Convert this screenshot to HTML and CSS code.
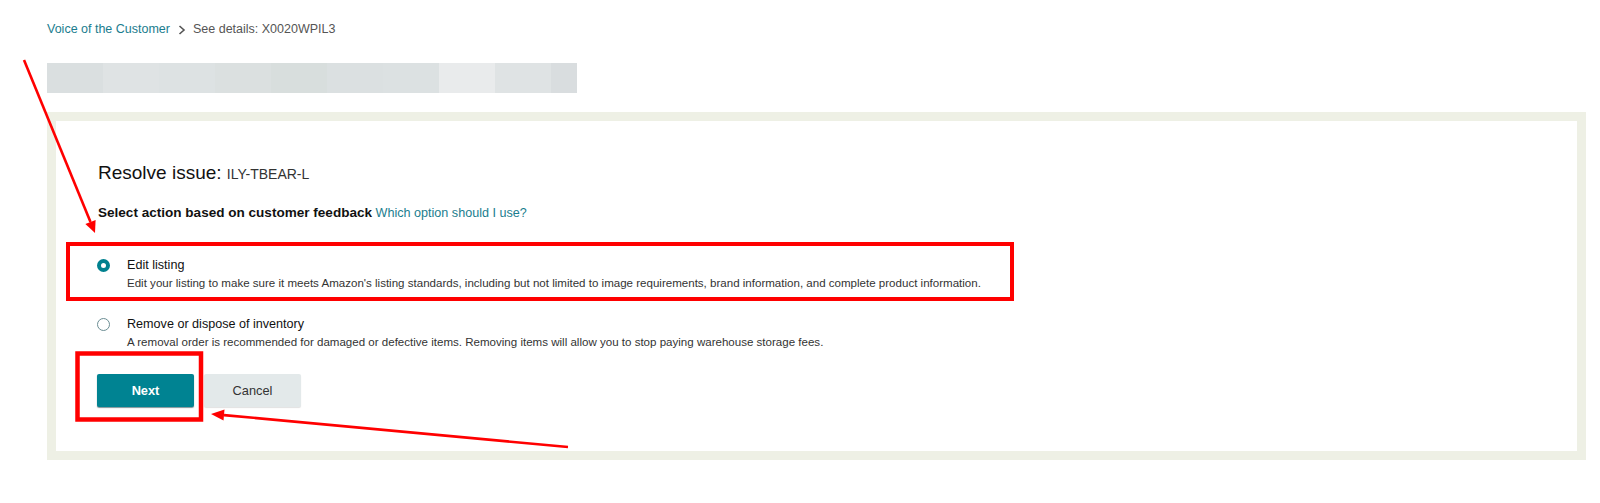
FILE: index.html
```html
<!DOCTYPE html>
<html lang="en">
<head>
  <meta charset="UTF-8" />
  <title>Resolve issue - Voice of the Customer</title>
  <meta name="viewport" content="width=device-width, initial-scale=1.0">
  <link rel="stylesheet" href="styles.css">
</head>
<body>
  <div class="crumbs">
    <a class="crumb-link" href="#">Voice of the Customer</a>
    <span class="crumb-sep">
      <svg width="8" height="10" viewBox="0 0 8 10"><path d="M1.5 1 L6 5 L1.5 9" fill="none" stroke="#555" stroke-width="1.6"/></svg>
    </span>
    <span class="crumb-current">See details: X0020WPIL3</span>
  </div>

  <div class="blurred-bar"></div>

  <div class="frame">
    <div class="panel">
      <h1 class="title">Resolve issue: <span class="sku">ILY-TBEAR-L</span></h1>
      <p class="prompt"><b>Select action based on customer feedback</b> <a href="#">Which option should I use?</a></p>

      <div class="options">
        <label class="option">
          <span class="radio checked"></span>
          <span class="option-text">
            <span class="option-label">Edit listing</span>
            <span class="option-desc">Edit your listing to make sure it meets Amazon's listing standards, including but not limited to image requirements, brand information, and complete product information.</span>
          </span>
        </label>
        <label class="option">
          <span class="radio"></span>
          <span class="option-text">
            <span class="option-label">Remove or dispose of inventory</span>
            <span class="option-desc">A removal order is recommended for damaged or defective items. Removing items will allow you to stop paying warehouse storage fees.</span>
          </span>
        </label>
      </div>

      <div class="actions">
        <button class="btn btn-primary">Next</button>
        <button class="btn btn-secondary">Cancel</button>
      </div>
    </div>
  </div>

  <!-- annotation marks drawn over the screenshot -->
  <svg class="marks" width="1600" height="503" viewBox="0 0 1600 503">
    <rect x="68" y="244" width="944" height="55" fill="none" stroke="#ff0000" stroke-width="4"/>
    <rect x="77.5" y="353.5" width="123.5" height="66" fill="none" stroke="#ff0000" stroke-width="4.5"/>
    <line x1="24" y1="60" x2="90.5" y2="222" stroke="#ff0000" stroke-width="2.6"/>
    <polygon points="95,233 95.6,220 85.4,224" fill="#ff0000"/>
    <line x1="568" y1="447" x2="224" y2="415.1" stroke="#ff0000" stroke-width="2.6"/>
    <polygon points="211,414 224.5,409.6 223.5,420.6" fill="#ff0000"/>
  </svg>
</body>
</html>
```

FILE: styles.css
```css
body {
  font-family: "Liberation Sans", Arial, sans-serif;
  margin: 0;
  background: #fff;
  color: #111;
  position: relative;
  width: 1600px;
  height: 503px;
  overflow: hidden;
}

a {
  color: #1a7d8e;
  text-decoration: none;
}

.crumbs {
  display: flex;
  align-items: center;
  padding: 21px 0 0 47px;
  height: 17px;
  font-size: 12.5px;
  line-height: 17px;
}
.crumb-sep {
  display: flex;
  margin: 0 7px 0 8px;
}
.crumb-current {
  color: #555;
}

.blurred-bar {
  margin: 25px 0 0 47px;
  width: 530px;
  height: 30px;
  background: linear-gradient(to right,
    #dadfe0 0, #dadfe0 56px,
    #dfe3e4 56px, #dfe3e4 112px,
    #dde2e3 112px, #dde2e3 168px,
    #dbe0e0 168px, #dbe0e0 224px,
    #d8dedd 224px, #d8dedd 280px,
    #dbe0e1 280px, #dbe0e1 336px,
    #dce1e2 336px, #dce1e2 392px,
    #e9ebec 392px, #e9ebec 448px,
    #dfe3e4 448px, #dfe3e4 504px,
    #d9dddf 504px);
}

.frame {
  margin: 19px 0 0 47px;
  width: 1521px;
  border: 9px solid #eef0e5;
  height: 330px;
}
.panel {
  padding: 40px 0 0 42px;
}

.title {
  margin: 0;
  font-size: 19px;
  font-weight: normal;
  line-height: 24px;
  color: #111;
}
.sku {
  font-size: 14px;
  color: #333;
}

.prompt {
  margin: 18px 0 0;
  font-size: 12.6px;
  line-height: 18px;
}
.prompt b {
  font-size: 13.55px;
  color: #111;
}

.options {
  display: flex;
  flex-direction: column;
  gap: 23px;
  margin-top: 34px;
}
.option {
  display: flex;
  align-items: flex-start;
  gap: 17px;
  cursor: pointer;
}
.radio {
  box-sizing: border-box;
  width: 13px;
  height: 13px;
  margin: 3px 0 0 -1px;
  border-radius: 50%;
  border: 1px solid #6b8d93;
  background: #fff;
  flex-shrink: 0;
}
.radio.checked {
  border: 4px solid #00818f;
}
.option-text {
  display: flex;
  flex-direction: column;
}
.option-label {
  font-size: 12.6px;
  line-height: 18px;
  color: #111;
}
.option-desc {
  font-size: 11.55px;
  line-height: 18px;
  color: #333;
}

.actions {
  display: flex;
  gap: 10px;
  margin-top: 23px;
  margin-left: -1px;
}
.btn {
  width: 97px;
  height: 33px;
  border: none;
  border-radius: 2px;
  font-family: "Liberation Sans", Arial, sans-serif;
  font-size: 12.8px;
  cursor: pointer;
}
.btn-primary {
  background: #008392;
  color: #fff;
  font-weight: bold;
  box-shadow: 0 1px 1px rgba(0, 40, 50, 0.5);
}
.btn-secondary {
  background: #e3e9ea;
  color: #333;
  box-shadow: 0 1px 1px rgba(0, 0, 0, 0.12);
}

.marks {
  position: absolute;
  left: 0;
  top: 0;
  pointer-events: none;
}
```
